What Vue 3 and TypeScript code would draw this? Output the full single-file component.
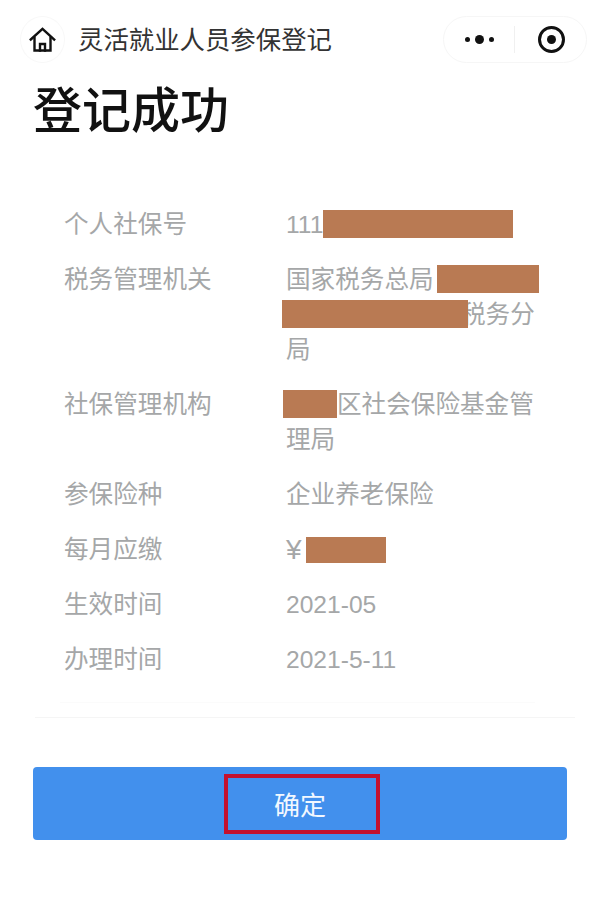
<script setup lang="ts">
interface Line {
  before?: string
  mask?: number
  after?: string
  gap?: number
  overlap?: number
  height?: number
  yen?: boolean
}

interface Row {
  label: string
  lines: Line[]
}

const rows: Row[] = [
  { label: '个人社保号', lines: [{ before: '111', mask: 190 }] },
  {
    label: '税务管理机关',
    lines: [
      { before: '国家税务总局', mask: 102, gap: 3 },
      { mask: 186, gap: -4, after: '税务分', overlap: -7 },
      { before: '局' }
    ]
  },
  {
    label: '社保管理机构',
    lines: [{ mask: 54, gap: -3, after: '区社会保险基金管' }, { before: '理局' }]
  },
  { label: '参保险种', lines: [{ before: '企业养老保险' }] },
  { label: '每月应缴', lines: [{ before: '¥', yen: true, mask: 80, gap: 4, height: 26 }] },
  { label: '生效时间', lines: [{ before: '2021-05' }] },
  { label: '办理时间', lines: [{ before: '2021-5-11' }] }
]
</script>

<template>
  <div class="page">
    <header class="nav">
      <div class="home">
        <svg width="27" height="25" viewBox="0 0 27 25" fill="none" stroke="#111" stroke-width="2.4" stroke-linejoin="miter" stroke-linecap="square">
          <path d="M1.800 12.500 13.500 1.800l11.700 10.700" />
          <path d="M5.500 11v12.500h16V11" />
          <path d="M11 23.500v-6.500h5v6.500" />
        </svg>
      </div>
      <div class="nav-title">灵活就业人员参保登记</div>
      <div class="capsule">
        <div class="dots">
          <i class="dot" /><i class="dot big" /><i class="dot" />
        </div>
        <div class="divider" />
        <div class="target"><i /></div>
      </div>
    </header>

    <h1 class="title">登记成功</h1>

    <section class="list">
      <div v-for="row in rows" :key="row.label" class="row">
        <div class="label">{{ row.label }}</div>
        <div class="value">
          <div v-for="(line, i) in row.lines" :key="i" class="line">
            <span v-if="line.before" :class="{ yen: line.yen }">{{ line.before }}</span>
            <span
              v-if="line.mask"
              class="mask"
              :style="{
                width: line.mask + 'px',
                height: (line.height ?? 28) + 'px',
                marginLeft: (line.gap ?? 0) + 'px',
                marginTop: (line.height ? 0 : -2) + 'px'
              }"
            />
            <span v-if="line.after" :style="{ marginLeft: (line.overlap ?? 0) + 'px' }">{{ line.after }}</span>
          </div>
        </div>
      </div>
    </section>

    <div class="rule faint" />
    <div class="rule" />

    <div class="action">
      <button class="confirm" type="button">
        确定
        <span class="highlight" />
      </button>
    </div>
  </div>
</template>

<style>
html,
body {
  margin: 0;
  background: #fff;
}
</style>

<style scoped>
.page {
  box-sizing: border-box;
  width: 600px;
  height: 898px;
  overflow: hidden;
  background: #fff;
  font-family: "Liberation Sans", "Noto Sans CJK SC", sans-serif;
}

.nav {
  box-sizing: border-box;
  height: 64px;
  padding: 15px 13px 0 20px;
  display: flex;
  align-items: center;
}

.home {
  width: 45px;
  height: 47px;
  border-radius: 50%;
  border: 1px solid #f8f8f8;
  box-sizing: border-box;
  display: flex;
  align-items: center;
  justify-content: center;
}

.nav-title {
  margin: 2px 0 0 13px;
  font-size: 25.4px;
  line-height: 47px;
  color: #333;
  white-space: nowrap;
  flex: 1;
}

.capsule {
  box-sizing: border-box;
  width: 144px;
  height: 47px;
  border: 1px solid #f6f6f6;
  border-radius: 24px;
  display: flex;
  align-items: center;
}

.dots {
  width: 70px;
  display: flex;
  align-items: center;
  justify-content: center;
  gap: 5px;
}

.dot {
  width: 5px;
  height: 5px;
  border-radius: 50%;
  background: #111;
}

.dot.big {
  width: 9px;
  height: 9px;
}

.divider {
  width: 1px;
  height: 27px;
  background: #f0f0f0;
}

.target {
  box-sizing: border-box;
  width: 27px;
  height: 27px;
  margin-left: 23px;
  border: 3px solid #111;
  border-radius: 50%;
  display: flex;
  align-items: center;
  justify-content: center;
}

.target i {
  width: 9px;
  height: 9px;
  border-radius: 50%;
  background: #111;
}

.title {
  margin: 19px 0 0 33px;
  font-size: 49px;
  line-height: 56px;
  font-weight: 500;
  color: #111;
}

.list {
  margin: 68px 0 0 64px;
  font-size: 24.6px;
  line-height: 35px;
  color: #a5a7a8;
}

.row {
  display: flex;
  padding-bottom: 20px;
}

.label {
  width: 222px;
  flex: none;
}

.value {
  width: 255px;
}

.line {
  height: 35px;
  display: flex;
  align-items: center;
  white-space: nowrap;
}

.yen {
  font-size: 28px;
}

.mask {
  position: relative;
  z-index: 1;
  background: #b97a53;
  flex: none;
}

.rule {
  height: 1px;
  margin: 0 25px 0 35px;
  background: #f5f5f5;
}

.rule.faint {
  margin: 5px 65px 14px 60px;
  background: #fbfbfb;
}

.action {
  margin: 49px 33px 0;
}

.confirm {
  position: relative;
  display: block;
  width: 100%;
  height: 73px;
  padding: 0;
  border: 0;
  border-radius: 4px;
  background: #4290ed;
  color: #f2f8ff;
  font-family: inherit;
  font-size: 26px;
  font-weight: 400;
}

.highlight {
  position: absolute;
  left: 191px;
  top: 7px;
  width: 156px;
  height: 60px;
  box-sizing: border-box;
  border: 4px solid #c4112e;
}
</style>
